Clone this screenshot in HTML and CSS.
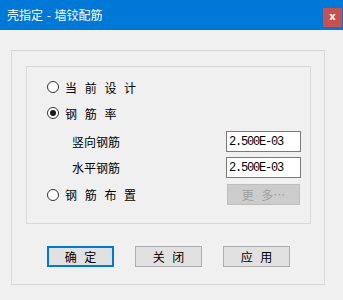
FILE: index.html
```html
<!DOCTYPE html>
<html lang="zh">
<head>
    <meta charset="UTF-8">
    <meta name="viewport" content="width=device-width, initial-scale=1.0">
    <title>壳指定 - 墙铰配筋</title>
    <link rel="stylesheet" href="styles.css">
</head>
<body>
    <div class="window">
        <div class="titlebar">
            <span class="title">壳指定 - 墙铰配筋</span>
            <span class="close">x</span>
        </div>
        <div class="content">
            <div class="frame">
                <div class="group">
                    <div class="row option">
                        <span class="radio"></span>
                        <span class="opt-text">当 前 设 计</span>
                    </div>
                    <div class="row option">
                        <span class="radio checked"></span>
                        <span class="opt-text">钢 筋 率</span>
                    </div>
                    <div class="row field">
                        <span class="field-label">竖向钢筋</span>
                        <input type="text" class="num" value="2.500E-03">
                    </div>
                    <div class="row field">
                        <span class="field-label">水平钢筋</span>
                        <input type="text" class="num" value="2.500E-03">
                    </div>
                    <div class="row field last">
                        <span class="radio"></span>
                        <span class="opt-text">钢 筋 布 置</span>
                        <button class="more" disabled>更 多…</button>
                    </div>
                </div>
                <div class="actions">
                    <button class="btn default">确 定</button>
                    <button class="btn">关 闭</button>
                    <button class="btn">应 用</button>
                </div>
            </div>
        </div>
    </div>
</body>
</html>
```

FILE: styles.css
```css
body {
    margin: 0;
    padding: 0;
    font-family: "Noto Sans CJK SC", "Noto Sans", sans-serif;
    font-size: 12px;
    color: #000;
    background-color: #f0f0f0;
}

.window {
    width: 343px;
    height: 300px;
    background-color: #f0f0f0;
}

.titlebar {
    height: 30px;
    background-color: #0078d7;
    display: flex;
    justify-content: space-between;
    align-items: flex-start;
    padding-left: 7px;
    box-sizing: border-box;
}

.title {
    color: #fff;
    line-height: 30px;
    word-spacing: 1px;
}

.close {
    width: 19px;
    height: 19px;
    margin-top: 8px;
    margin-right: 1px;
    background-color: #c75050;
    color: #fff;
    font-family: "DejaVu Sans", sans-serif;
    font-weight: bold;
    font-size: 10px;
    line-height: 18px;
    text-align: center;
}

.content {
    padding: 20px 0 0 11px;
}

.frame {
    width: 314px;
    height: 235px;
    box-sizing: border-box;
    border: 1px solid #d9d9d9;
    padding: 15px 0 0 14px;
}

.group {
    width: 285px;
    height: 158px;
    box-sizing: border-box;
    border: 1px solid #d9d9d9;
    padding: 7px 9px 0 20px;
    display: flex;
    flex-direction: column;
}

.row {
    display: flex;
    align-items: center;
}

.option {
    height: 26px;
}

.field {
    height: 21px;
    margin-top: 5px;
}

.last {
    margin-top: 6px;
}

.radio {
    width: 12px;
    height: 12px;
    box-sizing: border-box;
    border: 1px solid #333;
    border-radius: 50%;
    background-color: #fff;
    margin-right: 6px;
    display: flex;
    align-items: center;
    justify-content: center;
}

.radio.checked::after {
    content: "";
    width: 6px;
    height: 6px;
    border-radius: 50%;
    background-color: #1a1a1a;
}

.opt-text {
    word-spacing: 5px;
}

.field-label {
    margin-left: 25px;
}

.num {
    margin-left: auto;
    width: 75px;
    height: 21px;
    box-sizing: border-box;
    border: 1px solid #7a7a7a;
    background-color: #fff;
    padding: 0 0 0 2px;
    font-family: "Liberation Mono", monospace;
    font-size: 12px;
    letter-spacing: -1.2px;
    color: #000;
    outline: none;
}

.more {
    margin-left: auto;
    width: 73px;
    height: 21px;
    margin-right: 1px;
    box-sizing: border-box;
    border: 1px solid #bfbfbf;
    background-color: #cccccc;
    color: #a0a0a0;
    font-family: "Noto Sans CJK SC", sans-serif;
    font-size: 12px;
    word-spacing: 5px;
    padding: 0;
}

.actions {
    display: flex;
    gap: 21px;
    margin-top: 22px;
    padding-left: 21px;
}

.btn {
    width: 67px;
    height: 21px;
    box-sizing: border-box;
    border: 1px solid #adadad;
    background-color: #e1e1e1;
    font-family: "Noto Sans CJK SC", sans-serif;
    font-size: 12px;
    word-spacing: 5px;
    color: #000;
    padding: 0;
}

.btn.default {
    border: 2px solid #0078d7;
}
```
